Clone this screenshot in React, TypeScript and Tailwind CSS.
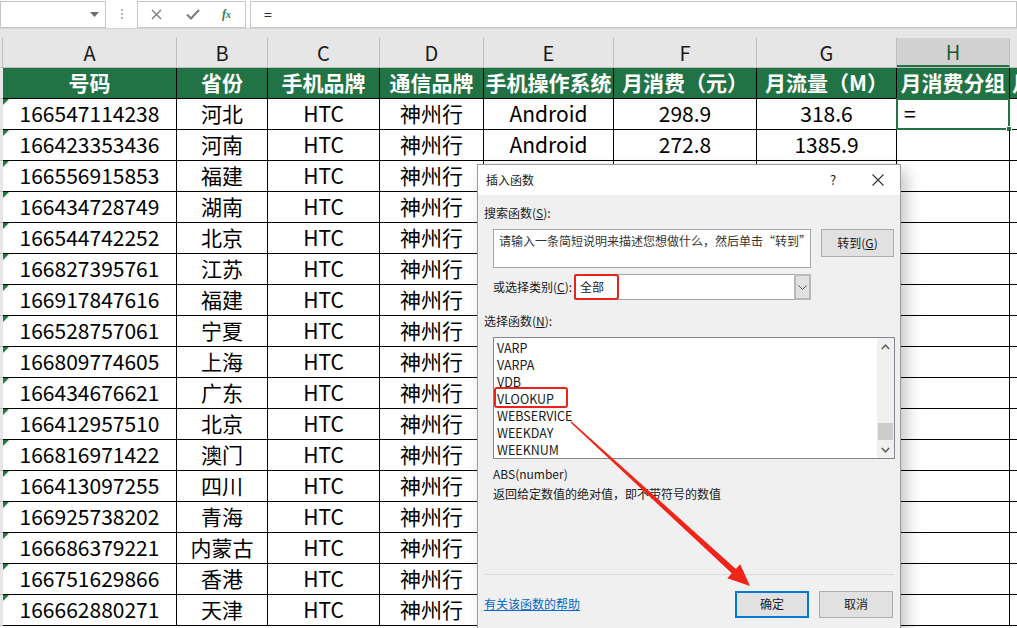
import React from "react";

const rows: [string, string][] = [
  ["166547114238", "河北"],
  ["166423353436", "河南"],
  ["166556915853", "福建"],
  ["166434728749", "湖南"],
  ["166544742252", "北京"],
  ["166827395761", "江苏"],
  ["166917847616", "福建"],
  ["166528757061", "宁夏"],
  ["166809774605", "上海"],
  ["166434676621", "广东"],
  ["166412957510", "北京"],
  ["166816971422", "澳门"],
  ["166413097255", "四川"],
  ["166925738202", "青海"],
  ["166686379221", "内蒙古"],
  ["166751629866", "香港"],
  ["166662880271", "天津"],
];

const widths = [
  "w-[174px]",
  "w-[91px]",
  "w-[112px]",
  "w-[104px]",
  "w-[130px]",
  "w-[143px]",
  "w-[140px]",
  "w-[113px]",
  "w-[40px]",
];

const letters = ["A", "B", "C", "D", "E", "F", "G", "H", "I"];
const headers = ["号码", "省份", "手机品牌", "通信品牌", "手机操作系统", "月消费（元）", "月流量（M）", "月消费分组", "月"];

const funcs = ["VARP", "VARPA", "VDB", "VLOOKUP", "WEBSERVICE", "WEEKDAY", "WEEKNUM"];

function Arrow() {
  const sx = 571, sy = 422, tx = 750, ty = 586;
  const dx = tx - sx, dy = ty - sy;
  const len = Math.sqrt(dx * dx + dy * dy);
  const ux = dx / len, uy = dy / len;
  const px = -uy, py = ux;
  const bx = tx - 22 * ux, by = ty - 22 * uy;
  const pts = [
    [sx + 0.8 * px, sy + 0.8 * py],
    [bx + 3 * px, by + 3 * py],
    [bx + 9.5 * px, by + 9.5 * py],
    [tx, ty],
    [bx - 9.5 * px, by - 9.5 * py],
    [bx - 3 * px, by - 3 * py],
    [sx - 0.8 * px, sy - 0.8 * py],
  ]
    .map((p) => p.join(","))
    .join(" ");
  return (
    <svg className="absolute left-0 top-0 pointer-events-none" width="1017" height="628">
      <polygon points={pts} fill="#f22318" />
    </svg>
  );
}

export default function App() {
  return (
    <div className="relative w-[1017px] h-[628px] overflow-hidden bg-white font-['Noto_Sans_CJK_SC','Noto_Sans',sans-serif] text-black">
      {/* formula bar */}
      <div className="h-[29px] flex items-center bg-white border-b border-[#d6d6d6]">
        <div className="ml-0 w-[106px] h-[27px] border border-[#c6c6c6] bg-white flex items-center justify-end pr-[6px]">
          <svg width="9" height="5" viewBox="0 0 9 5">
            <polygon points="0,0 9,0 4.5,5" fill="#6b6b6b" />
          </svg>
        </div>
        <div className="w-[31px] flex justify-center">
          <div className="flex flex-col gap-[2px]">
            <span className="block w-[2px] h-[2px] bg-[#b5b5b5]" />
            <span className="block w-[2px] h-[2px] bg-[#b5b5b5]" />
            <span className="block w-[2px] h-[2px] bg-[#b5b5b5]" />
          </div>
        </div>
        <div className="w-[109px] h-[27px] border border-[#c6c6c6] flex items-center">
          <svg className="ml-[13px]" width="11" height="11" viewBox="0 0 11 11">
            <path d="M1 1 L10 10 M10 1 L1 10" stroke="#7a7a7a" strokeWidth="1.4" />
          </svg>
          <svg className="ml-[24px]" width="14" height="11" viewBox="0 0 14 11">
            <path d="M1 5.5 L5 9.5 L13 1" stroke="#7a7a7a" strokeWidth="2" fill="none" />
          </svg>
          <span className="ml-[22px] text-[12px] italic font-bold text-[#2e7d4a] font-['Liberation_Serif',serif]">
            f<span className="text-[10px]">x</span>
          </span>
        </div>
        <div className="ml-[4px] flex-1 h-[27px] border border-[#c6c6c6] flex items-center pl-[13px] text-[14px] text-[#333]">
          =
        </div>
      </div>
      <div className="h-[9px] bg-[#e6e6e6]" />

      {/* column headers */}
      <div className="flex h-[30px] bg-[#e6e6e6] border-b border-[#bdbdbd]">
        <div className="w-[3px] shrink-0 border-r border-[#bdbdbd]" />
        {letters.map((l, i) => (
          <div
            key={l}
            className={`${widths[i]} shrink-0 flex items-center justify-center border-r border-[#bdbdbd] text-[20px] ${
              l === "H" ? "bg-[#d2d2d2] text-[#1e5a36] border-b-2 border-b-[#217346]" : "text-[#1a1a1a]"
            }`}
          >
            {l}
          </div>
        ))}
      </div>

      {/* header row */}
      <div className="flex h-[31px]">
        <div className="w-[3px] shrink-0 bg-[#e6e6e6] border-b border-[#bdbdbd]" />
        {headers.map((h, i) => (
          <div
            key={i}
            className={`${widths[i]} shrink-0 overflow-hidden whitespace-nowrap flex items-center ${
              i === 8 ? "justify-start pl-[2px]" : "justify-center"
            } bg-[#217346] text-white font-bold text-[21px] border-r border-b border-black`}
          >
            {h}
          </div>
        ))}
      </div>

      {/* data rows */}
      {rows.map(([num, prov], r) => (
        <div key={r} className="flex h-[31px]">
          <div className="w-[3px] shrink-0 bg-[#e6e6e6] border-b border-[#bdbdbd]" />
          <div className={`${widths[0]} relative shrink-0 flex items-center justify-center border-r border-b border-black text-[21px]`}>
            <span className="absolute left-0 top-0 w-0 h-0 border-t-[6px] border-r-[6px] border-t-[#1f7a3f] border-r-transparent" />
            {num}
          </div>
          <div className={`${widths[1]} shrink-0 flex items-center justify-center border-r border-b border-black text-[21px]`}>{prov}</div>
          <div className={`${widths[2]} shrink-0 flex items-center justify-center border-r border-b border-black text-[21px]`}>HTC</div>
          <div className={`${widths[3]} shrink-0 flex items-center justify-center border-r border-b border-black text-[21px]`}>神州行</div>
          <div className={`${widths[4]} shrink-0 flex items-center justify-center border-r border-b border-black text-[21px]`}>
            {r < 2 ? "Android" : ""}
          </div>
          <div className={`${widths[5]} shrink-0 flex items-center justify-center border-r border-b border-black text-[21px]`}>
            {r === 0 ? "298.9" : r === 1 ? "272.8" : ""}
          </div>
          <div className={`${widths[6]} shrink-0 flex items-center justify-center border-r border-b border-black text-[21px]`}>
            {r === 0 ? "318.6" : r === 1 ? "1385.9" : ""}
          </div>
          <div className={`${widths[7]} relative shrink-0 flex items-center border-r border-b border-black text-[21px] pl-[7px]`}>
            {r === 0 && (
              <>
                <span>=</span>
                <span className="absolute -left-px -top-px -right-px -bottom-px border-2 border-[#217346]" />
                <span className="absolute -right-[3px] -bottom-[3px] w-[6px] h-[6px] bg-[#217346] border border-white" />
              </>
            )}
          </div>
          <div className={`${widths[8]} shrink-0 border-r border-b border-black`} />
        </div>
      ))}

      {/* dialog */}
      <div className="absolute left-[477px] top-[164px] w-[424px] h-[470px] bg-[#f0f0f0] border border-[#9b9b9b] shadow-[6px_6px_14px_rgba(0,0,0,0.22)] text-[12px] text-[#1a1a1a]">
        <div className="h-[30px] bg-white flex items-center pl-[8px] relative">
          <span>插入函数</span>
          <span className="absolute left-[352px] top-[5px] text-[13px]">?</span>
          <svg className="absolute left-[394px] top-[9px]" width="12" height="12" viewBox="0 0 12 12">
            <path d="M0.5 0.5 L11.5 11.5 M11.5 0.5 L0.5 11.5" stroke="#333" strokeWidth="1.1" />
          </svg>
        </div>
        <div className="flex flex-col">
          <div className="mt-[9px] h-[17px] leading-[17px] pl-[6px]">
            搜索函数(<span className="underline">S</span>):
          </div>
          <div className="mt-[8px] flex items-start">
            <div className="ml-[15px] w-[318px] h-[39px] bg-white border border-[#a6a6a6] pl-[5px] pt-[3px] leading-[16px] text-[#333]">
              请输入一条简短说明来描述您想做什么，然后单击“转到”
            </div>
            <div className="ml-[10px] w-[73px] h-[28px] bg-[#e1e1e1] border border-[#adadad] flex items-center justify-center">
              转到(<span className="underline">G</span>)
            </div>
          </div>
          <div className="mt-[6px] flex items-center h-[26px]">
            <div className="pl-[15px] w-[96px] whitespace-nowrap">
              或选择类别(<span className="underline">C</span>):
            </div>
            <div className="relative w-[237px] h-[26px] bg-white border border-[#a6a6a6] flex items-center">
              <span className="pl-[5px]">全部</span>
              <span className="absolute left-[-1px] top-[-1px] w-[45px] h-[26px] border-2 border-[#e8231b] rounded-[3px]" />
              <div className="absolute right-[-1px] top-[-1px] w-[17px] h-[26px] bg-[#e1e1e1] border-2 border-[#b9b9b9] flex items-center justify-center">
                <svg width="9" height="5" viewBox="0 0 9 5">
                  <path d="M0.5 0.5 L4.5 4.5 L8.5 0.5" stroke="#555" fill="none" strokeWidth="1" />
                </svg>
              </div>
            </div>
          </div>
          <div className="mt-[12px] h-[17px] leading-[17px] pl-[6px]">
            选择函数(<span className="underline">N</span>):
          </div>
          <div className="mt-[8px] ml-[15px] relative w-[402px] h-[122px] bg-white border border-[#828790] flex">
            <div className="flex-1 pt-[1px] pl-[3px] text-[12.5px]">
              {funcs.map((f) => (
                <div key={f} className="h-[17px] leading-[17px]">
                  {f}
                </div>
              ))}
            </div>
            <div className="w-[17px] flex flex-col items-center bg-[#f0f0f0]">
              <svg className="mt-[6px]" width="9" height="6" viewBox="0 0 9 6">
                <path d="M0.8 5 L4.5 1.2 L8.2 5" stroke="#606060" fill="none" strokeWidth="1.6" />
              </svg>
              <div className="mt-[73px] w-[15px] h-[17px] bg-[#cdcdcd]" />
              <svg className="mt-[7px]" width="9" height="6" viewBox="0 0 9 6">
                <path d="M0.8 1 L4.5 4.8 L8.2 1" stroke="#606060" fill="none" strokeWidth="1.6" />
              </svg>
            </div>
            <span className="absolute left-0 top-[49px] w-[74px] h-[21px] border-2 border-[#e8231b] rounded-[3px]" />
          </div>
          <div className="mt-[6px] h-[17px] leading-[17px] pl-[15px]">ABS(number)</div>
          <div className="mt-[3px] h-[17px] leading-[17px] pl-[15px]">返回给定数值的绝对值，即不带符号的数值</div>
          <div className="mt-[72px] mx-[6px] h-px bg-[#dcdcdc]" />
          <div className="mt-[16px] flex items-center h-[26px]">
            <span className="pl-[6px] text-[#0066cc] underline">有关该函数的帮助</span>
            <div className="ml-auto w-[74px] h-[27px] bg-[#e1e1e1] border-2 border-[#0078d7] flex items-center justify-center">
              确定
            </div>
            <div className="ml-[10px] mr-[7px] w-[74px] h-[27px] bg-[#e1e1e1] border border-[#adadad] flex items-center justify-center">
              取消
            </div>
          </div>
        </div>
      </div>

      <Arrow />
    </div>
  );
}
